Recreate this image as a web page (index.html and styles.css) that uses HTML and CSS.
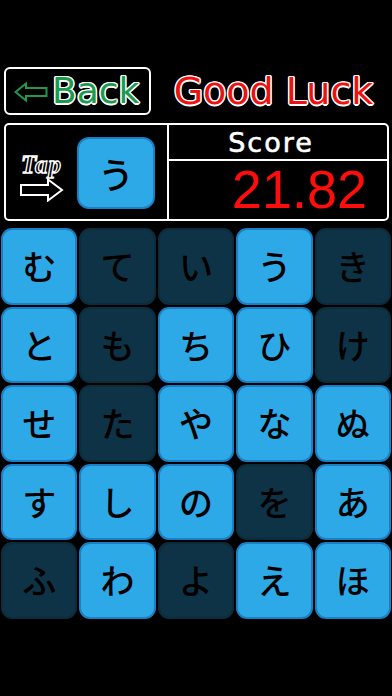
FILE: index.html
```html
<!DOCTYPE html>
<html lang="ja">
<head>
<meta charset="utf-8">
<link rel="stylesheet" href="styles.css">
</head>
<body>
<div class="screen">
  <div class="header">
    <div class="back">
      <svg class="back-arrow" width="34" height="20" viewBox="0 0 34 20">
        <polygon points="1.5,10 12,1.5 12,6 32.5,6 32.5,14 12,14 12,18.5" fill="none" stroke="#1e9a4e" stroke-width="2" stroke-linejoin="miter"/>
      </svg>
      <span class="back-text">Back</span>
    </div>
    <div class="luck">Good Luck</div>
  </div>

  <div class="panel">
    <div class="target">
      <div class="tap">
        <span class="tap-text">Tap</span>
        <svg class="tap-arrow" width="44" height="24" viewBox="0 0 44 24">
          <polygon points="1,7 28,7 28,1.5 42,12 28,22.5 28,17 1,17" fill="#000" stroke="#fff" stroke-width="2" stroke-linejoin="miter"/>
        </svg>
      </div>
      <div class="tile blue big">う</div>
    </div>
    <div class="score">
      <div class="score-label">Score</div>
      <div class="score-value">21.82</div>
    </div>
  </div>

  <div class="grid">
    <div class="tile blue">む</div>
    <div class="tile dark">て</div>
    <div class="tile dark">い</div>
    <div class="tile blue">う</div>
    <div class="tile dark">き</div>

    <div class="tile blue">と</div>
    <div class="tile dark">も</div>
    <div class="tile blue">ち</div>
    <div class="tile blue">ひ</div>
    <div class="tile dark">け</div>

    <div class="tile blue">せ</div>
    <div class="tile dark">た</div>
    <div class="tile blue">や</div>
    <div class="tile blue">な</div>
    <div class="tile blue">ぬ</div>

    <div class="tile blue">す</div>
    <div class="tile blue">し</div>
    <div class="tile blue">の</div>
    <div class="tile dark">を</div>
    <div class="tile blue">あ</div>

    <div class="tile dark">ふ</div>
    <div class="tile blue">わ</div>
    <div class="tile dark">よ</div>
    <div class="tile blue">え</div>
    <div class="tile blue">ほ</div>
  </div>
</div>
</body>
</html>
```

FILE: styles.css
```css
html, body {
  margin: 0;
  padding: 0;
  background: #000;
}

.screen {
  width: 392px;
  height: 696px;
  background: #000;
  padding-top: 67px;
  box-sizing: border-box;
  font-family: "DejaVu Sans", sans-serif;
}

.header {
  display: flex;
  align-items: center;
  padding: 0 4px;
  height: 48px;
}

.back {
  width: 147px;
  height: 48px;
  box-sizing: border-box;
  border: 2px solid #fff;
  border-radius: 6px;
  display: flex;
  align-items: center;
  padding-left: 8px;
  gap: 4px;
}

.back-arrow {
  display: block;
  margin-top: 1px;
}

.back-text {
  font-size: 36px;
  line-height: 1;
  color: #1e9a4e;
  text-shadow:
    1.5px 0 0 #fff, -1.5px 0 0 #fff, 0 1.5px 0 #fff, 0 -1.5px 0 #fff,
    1px 1px 0 #fff, -1px 1px 0 #fff, 1px -1px 0 #fff, -1px -1px 0 #fff;
}

.luck {
  flex: 1;
  text-align: center;
  padding-left: 8px;
  font-size: 38px;
  line-height: 1;
  color: #ee1111;
  text-shadow:
    1.5px 0 0 #fff, -1.5px 0 0 #fff, 0 1.5px 0 #fff, 0 -1.5px 0 #fff,
    1px 1px 0 #fff, -1px 1px 0 #fff, 1px -1px 0 #fff, -1px -1px 0 #fff;
}

.panel {
  margin: 8px 3px 0 4px;
  height: 98px;
  box-sizing: border-box;
  border: 2px solid #fff;
  border-radius: 5px;
  display: grid;
  grid-template-columns: 163px 1fr;
}

.target {
  border-right: 2px solid #fff;
  display: flex;
  align-items: center;
  padding-left: 14px;
  gap: 13px;
}

.tap {
  display: flex;
  flex-direction: column;
  align-items: flex-start;
  margin-top: 12px;
}

.tap-text {
  font-family: "Liberation Serif", serif;
  font-style: italic;
  font-weight: bold;
  font-size: 25px;
  line-height: 20px;
  letter-spacing: 1px;
  color: #000;
  -webkit-text-stroke: 1.3px #fff;
  padding-left: 1px;
}

.tap-arrow {
  display: block;
  margin-top: 3px;
}

.score {
  display: grid;
  grid-template-rows: 36px 1fr;
}

.score-label {
  border-bottom: 2px solid #fff;
  color: #fff;
  font-size: 27px;
  text-align: center;
  line-height: 36px;
  padding-right: 14px;
  letter-spacing: 2px;
  -webkit-text-stroke: 0.6px #fff;
}

.score-value {
  font-family: "Liberation Sans", sans-serif;
  color: #ff0d0d;
  font-size: 54px;
  text-align: right;
  padding-right: 20px;
  line-height: 56px;
}

.grid {
  margin-top: 7px;
  display: grid;
  grid-template-columns: repeat(5, 1fr);
  grid-auto-rows: 76.5px;
  gap: 2px;
  padding: 0 1px;
}

.tile {
  display: flex;
  align-items: center;
  justify-content: center;
  border-radius: 11px;
  box-sizing: border-box;
  font-family: "Noto Sans CJK JP", sans-serif;
  font-size: 34px;
  font-weight: 500;
  color: #000;
  line-height: 1;
}

.tile.blue {
  background: #2ea9e8;
  border: 2px solid #1b7fc4;
}

.tile.dark {
  background: #0e3346;
  border: 2px solid #0c2c3c;
}

.tile.big {
  width: 78px;
  height: 72px;
  border-radius: 12px;
  font-size: 36px;
  margin-top: 2px;
}
```
